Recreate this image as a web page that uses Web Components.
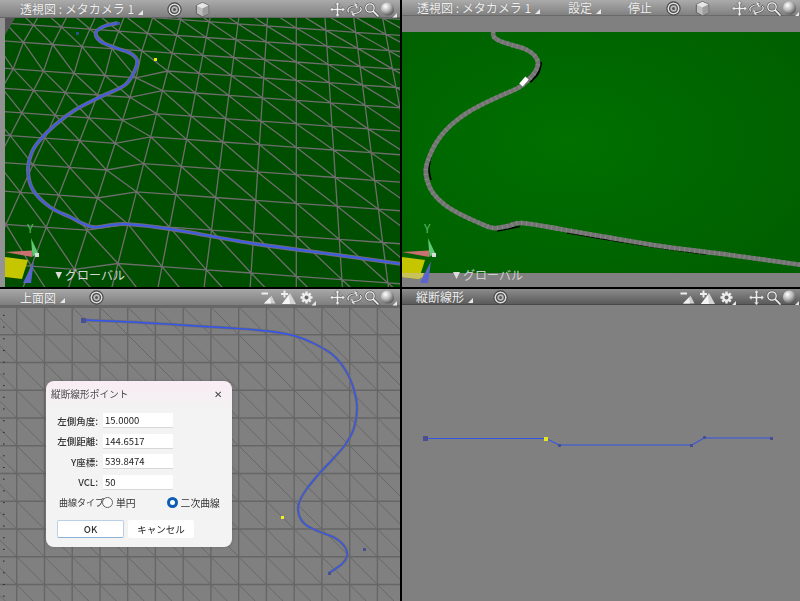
<!DOCTYPE html>
<html lang="ja"><head><meta charset="utf-8"><title>Shade</title>
<style>html,body{margin:0;padding:0;background:#000;overflow:hidden}</style></head>
<body>
<cad-app>
  <cad-view style="--bar-h:18px;--bar-a:#ababab;--bar-b:#7c7c7c">
    <view-bar slot="bar" style="--pl:20px;--pr:3.5px">
      <view-label>透視図 : メタカメラ 1</view-label>
      <view-icon name="target" style="margin-left:23px"></view-icon>
      <view-icon name="cube" style="margin-left:11px"></view-icon>
      <view-icon name="move" style="margin-left:auto"></view-icon>
      <view-icon name="rotate"></view-icon>
      <view-icon name="zoom"></view-icon>
      <view-icon name="sphere"></view-icon>
    </view-bar>
    <scene-one></scene-one>
  </cad-view>
  <cad-view style="--bar-h:16px;--bar-a:#ababab;--bar-b:#7e7e7e">
    <view-bar slot="bar" style="--pl:15px;--pr:1.5px">
      <view-label>透視図 : メタカメラ 1</view-label>
      <view-label style="margin-left:28px">設定</view-label>
      <view-label plain style="margin-left:27px">停止</view-label>
      <view-icon name="target" style="margin-left:13px"></view-icon>
      <view-icon name="cube" style="margin-left:11.5px"></view-icon>
      <view-icon name="move" style="margin-left:auto"></view-icon>
      <view-icon name="rotate"></view-icon>
      <view-icon name="zoom"></view-icon>
      <view-icon name="sphere"></view-icon>
    </view-bar>
    <scene-two></scene-two>
  </cad-view>
  <cad-view style="--bar-h:17px;--bar-a:#a8a8a8;--bar-b:#7c7c7c">
    <view-bar slot="bar" style="--pl:20px;--pr:3.5px">
      <view-label>上面図</view-label>
      <view-icon name="target" style="margin-left:23px"></view-icon>
      <view-icon name="mini-a" style="margin-left:auto"></view-icon>
      <view-icon name="mini-b" style="margin-left:3px"></view-icon>
      <view-icon name="mini-c" style="margin-left:2px;margin-right:13px"></view-icon>
      <view-icon name="move"></view-icon>
      <view-icon name="rotate"></view-icon>
      <view-icon name="zoom"></view-icon>
      <view-icon name="sphere"></view-icon>
    </view-bar>
    <scene-three></scene-three>
    <point-dialog style="left:46px;top:92px">
      <field-row label="左側角度:" value="15.0000"></field-row>
      <field-row label="左側距離:" value="144.6517"></field-row>
      <field-row label="Y座標:" value="539.8474"></field-row>
      <field-row label="VCL:" value="50"></field-row>
    </point-dialog>
  </cad-view>
  <cad-view style="--bar-h:16px;--bar-a:#8c8c8c;--bar-b:#575757">
    <view-bar slot="bar" style="--pl:14px;--pr:1.5px">
      <view-label>縦断線形</view-label>
      <view-icon name="target" style="margin-left:19px"></view-icon>
      <view-icon name="mini-a" style="margin-left:auto"></view-icon>
      <view-icon name="mini-b" style="margin-left:3px"></view-icon>
      <view-icon name="mini-c" style="margin-left:3px;margin-right:12px"></view-icon>
      <view-icon name="move"></view-icon>
      <view-icon name="zoom"></view-icon>
      <view-icon name="sphere"></view-icon>
    </view-bar>
    <scene-four></scene-four>
  </cad-view>
</cad-app>
<script>
const FONT = '"Noto Sans CJK JP","Noto Sans",sans-serif';
function smooth(p){
  let d = `M${p[0][0]} ${p[0][1]}`;
  for(let i=0;i<p.length-1;i++){
    const a=p[Math.max(i-1,0)],b=p[i],c=p[i+1],e=p[Math.min(i+2,p.length-1)];
    const f=n=>+n.toFixed(1);
    d+=`C${f(b[0]+(c[0]-a[0])/6)} ${f(b[1]+(c[1]-a[1])/6)} ${f(c[0]-(e[0]-b[0])/6)} ${f(c[1]-(e[1]-b[1])/6)} ${c[0]} ${c[1]}`;
  }
  return d;
}
function def(name, html, init){
  customElements.define(name, class extends HTMLElement{
    connectedCallback(){
      if(this.shadowRoot) return;
      const r=this.attachShadow({mode:'open'});
      r.innerHTML = typeof html==='function'?html(this):html;
      if(init) init(r,this);
    }
  });
}
def('cad-app',`<style>:host{display:grid;width:800px;height:601px;background:#000;grid-template-columns:400px 398px;grid-template-rows:287px 312px;column-gap:2px;row-gap:2px;font-family:${FONT}}</style><slot></slot>`);
def('cad-view',`<style>:host{display:flex;flex-direction:column;position:relative;overflow:hidden;background:#808080;min-width:0;min-height:0}
.b{flex:none;height:var(--bar-h);background:linear-gradient(var(--bar-a),var(--bar-b));box-shadow:inset 0 -1px 0 rgba(0,0,0,.18)}
.c{flex:1;min-height:0;display:block}</style><div class="b"><slot name="bar"></slot></div><div class="c"><slot></slot></div>`);
def('view-bar',`<style>:host{display:flex;align-items:center;height:100%;padding:0 var(--pr) 0 var(--pl);box-sizing:border-box}</style><slot></slot>`);
def('view-label',el=>`<style>:host{display:inline-flex;align-items:center;color:#f0f0f0;font-size:12px;line-height:14px;white-space:nowrap;text-shadow:0 0 1px rgba(60,60,60,.5)}
svg{width:5px;height:5px;margin:6px 0 0 4px}</style><slot></slot>${el.hasAttribute('plain')?'':'<svg viewBox="0 0 5 5"><path d="M5 0V5H0Z" fill="#e8e8e8"/></svg>'}`);
const corner='<path d="M17 12V16.5H12.5Z" fill="#e6e6e6"/>';
const ICONS={
 target:`<circle cx="8.5" cy="8.5" r="6.6" fill="#ddd" stroke="#444" stroke-width="1.1"/><circle cx="8.5" cy="8.5" r="3.9" fill="#bbb" stroke="#4a4a4a" stroke-width="1.3"/><circle cx="8.5" cy="8.5" r="1.5" fill="#555"/>`,
 cube:`<path d="M8.5 1.5L14.7 4.5V12.5L8.5 15.8L2.3 12.5V4.5Z" fill="#bdbdbd" stroke="#555" stroke-width=".9"/><path d="M8.5 1.8L14.5 4.6L8.5 7.6L2.5 4.6Z" fill="#e6e6e6"/><path d="M8.5 7.6V15.6L14.5 12.4V4.6Z" fill="#9d9d9d"/>`,
 move:`<path d="M8.5 .8L11.2 3.8H9.6V7.4H13.2V5.8L16.2 8.5L13.2 11.2V9.6H9.6V13.2H11.2L8.5 16.2L5.8 13.2H7.4V9.6H3.8V11.2L.8 8.5L3.8 5.8V7.4H7.4V3.8H5.8Z" fill="#eee" stroke="#5a5a5a" stroke-width=".6"/>`,
 rotate:`<g fill="none" stroke-linecap="round"><path d="M2.5 11C.2 8 4.5 5 9 4.7L11 3.5M14.5 6.5C17 9.5 12.5 12.5 8 12.7L6 14" stroke="#555" stroke-width="2.4"/><path d="M2.5 11C.2 8 4.5 5 9 4.7L11 3.5M14.5 6.5C17 9.5 12.5 12.5 8 12.7L6 14M9 3L11 6.5M8 14.5L5.8 10.8" stroke="#eee" stroke-width="1.1"/></g>`,
 zoom:`<g fill="none" stroke-linecap="round"><circle cx="7" cy="7" r="4.2" stroke="#555" stroke-width="2.6"/><path d="M10.4 10.4L15 15" stroke="#555" stroke-width="3.2"/><circle cx="7" cy="7" r="4.2" stroke="#f2f2f2" stroke-width="1.3"/><path d="M10.4 10.4L15 15" stroke="#f2f2f2" stroke-width="1.7"/></g>`,
 sphere:`<defs><radialGradient id="s" cx=".35" cy=".3" r=".8"><stop offset="0" stop-color="#fff"/><stop offset=".45" stop-color="#bbb"/><stop offset="1" stop-color="#444"/></radialGradient></defs><circle cx="7.5" cy="8" r="6.6" fill="url(#s)"/>${corner}`,
 'mini-a':`<path d="M1.5 3.5H8V5.5H1.5Z" fill="#eee"/><path d="M4 14.5L11.5 6.8L15.5 14.5Z" fill="#cfcfcf"/><path d="M4 14.5L10 8.5L11 14.5Z" fill="#f2f2f2"/>`,
 'mini-b':`<path d="M1 5H8M4.5 1.5V8.5" stroke="#eee" stroke-width="2"/><path d="M2 15L10 4L16 15Z" fill="#d5d5d5"/><path d="M2 15L9 6L10 15Z" fill="#f5f5f5"/>`,
 'mini-c':`<path d="M7.5 2.5V14.5M1.5 8.5H13.5M3.3 4.3L11.7 12.7M11.7 4.3L3.3 12.7" stroke="#eee" stroke-width="2.4"/><circle cx="7.5" cy="8.5" r="4.3" fill="#eee"/><circle cx="7.5" cy="8.5" r="2" fill="#6a6a6a"/>${corner}`
};
def('view-icon',el=>`<style>:host{display:block;flex:none;width:17px;height:17px}svg{display:block;width:17px;height:17px;overflow:visible}</style><svg viewBox="0 0 17 17">${ICONS[el.getAttribute('name')]}</svg>`);
const svgCss=`<style>:host{display:block;width:100%;height:100%}svg{display:block;width:100%;height:100%}text{font-family:${FONT}}</style>`;

function gizmo(dx){return `<g transform="translate(${dx} 0)">
 <text x="27" y="233" font-size="12" fill="#58b868" font-family="${FONT}">Y</text>
 <path d="M31 238L38 253L32.5 257Z" fill="#5fc872"/>
 <path d="M5 252L32 250.5V257Z" fill="#c97070"/>
 <path d="M5 257L28 260L22 279L5 277Z" fill="#c6c600"/>
 <path d="M34 261L31 283H23Z" fill="#5a64cc"/>
 <rect x="35" y="253" width="4" height="4" fill="#dcdcdc"/></g>`;}

def('scene-one',()=>{
  const rows=[-4,12,28,44,62,80.3,100.3,123.7,147.3,174.7,203.3,236.3,276.3,320];
  const pt=(u,i)=>{
    const y0=rows[i]; let y=y0,x=296.3;
    for(let k=0;k<4;k++){x=296.3+u*(27.6+.0644*y); y=y0+.072*(x-296.3);}
    if(u<-4&&y0>65) y+=9;
    return [+x.toFixed(1),+y.toFixed(1)];
  };
  let d='';
  const pl=a=>{d+='M'+a.map(p=>p.join(' ')).join('L');};
  const U0=-15,U1=11;
  for(let i=0;i<rows.length;i++){const a=[];for(let u=U0;u<=U1;u++)a.push(pt(u,i));pl(a);}
  for(let u=U0;u<=U1;u++){const a=[];for(let i=0;i<rows.length;i++)a.push(pt(u,i));pl(a);}
  for(let i=0;i+1<rows.length;i++)for(let u=U0;u<U1;u++)pl([pt(u,i),pt(u+1,i+1)]);
  const road=smooth([[118,23],[105,26],[96,32],[100,41],[116,48],[130,53],[137,60],[135,70],[125,85],[100,97],[75,110],[55,125],[40,140],[32,152],[28,170],[33,190],[50,207],[70,217],[93,227],[123,224],[170,229],[250,243],[330,254],[402,264]]);
  return svgCss+`<svg viewBox="0 18 400 269" preserveAspectRatio="none">
  <rect y="18" width="400" height="269" fill="#004f00"/>
  <path d="${d}" fill="none" stroke="#6e6e6e" stroke-width="1.3"/>
  <path d="M5 18H15L5 35Z" fill="#555"/>
  <path d="${road}" fill="none" stroke="#6c6c6c" stroke-width="4"/>
  <path d="${road}" fill="none" stroke="#3f5ce8" stroke-width="2"/>
  <rect x="117" y="22" width="3" height="3" fill="#3c55a8"/>
  <rect x="76" y="32" width="3" height="3" fill="#34508c"/>
  <rect x="154" y="58" width="3" height="3" fill="#f0f000"/>
  ${gizmo(0)}
  <path d="M55.5 272H62L58.7 279Z" fill="#ddd"/>
  <text x="65" y="280" font-size="12" fill="#d6d6d6">グローバル</text>
  <rect y="18" width="5" height="269" fill="#939393"/>
  </svg>`;
});
def('scene-two',()=>{
  const road=smooth([[493,32],[494,37],[500,41],[512,45],[525,49],[534,55],[538,63],[535,72],[527,81],[518,88],[500,96],[485,103],[470,111],[457,120],[445,131],[436,143],[430,155],[426,168],[427,180],[433,193],[445,205],[460,214],[477,222],[493,228],[508,226],[522,223],[560,229],[600,236],[660,246],[730,255],[802,265]]);
  return svgCss+`<svg viewBox="402 16 398 271" preserveAspectRatio="none">
  <defs><radialGradient id="g" cx=".42" cy=".45" r=".7"><stop offset="0" stop-color="#007000"/><stop offset="1" stop-color="#005f00"/></radialGradient>
  <clipPath id="c"><rect x="402" y="32" width="398" height="241"/></clipPath></defs>
  <rect x="402" y="16" width="398" height="271" fill="#808080"/>
  <rect x="402" y="32" width="398" height="241" fill="url(#g)"/>
  <g clip-path="url(#c)">
   <path d="${smooth([[567,232.5],[630,243],[706,254]])}" fill="none" stroke="#000" stroke-width="2"/>
   <path d="${smooth([[497,231],[520,226.5]])}" fill="none" stroke="#000" stroke-width="1.6"/>
   <path d="${smooth([[432,152],[429,168],[431,180]])}" fill="none" stroke="#000" stroke-width="1.6"/>
   <path d="${smooth([[541,62],[538,73],[530,82]])}" fill="none" stroke="#000" stroke-width="2.6"/>
   <path d="${road}" fill="none" stroke="#747474" stroke-width="4.6"/>
   <path d="${road}" fill="none" stroke="#878787" stroke-width="4.6" stroke-dasharray="1 4"/>
   <path d="M521 85L527 78" stroke="#fff" stroke-width="4.5" fill="none"/>
  </g>
  ${gizmo(397)}
  <path d="M402 273H424L422.5 277L419 279L402 277Z" fill="#c8c25a"/>
  <path d="M453 272H460L456.5 279Z" fill="#ddd"/>
  <text x="463" y="280" font-size="12" fill="#cfcfcf">グローバル</text>
  </svg>`;
});
def('scene-three',()=>{
  let d='',e='';
  for(let x=16.7;x<400;x+=27.75)d+=`M${x.toFixed(1)} 306V601`;
  for(let y=307;y<601;y+=27.75)d+=`M0 ${y.toFixed(1)}H400`;
  for(let k=-12;k<24;k++){const x=16.7+k*27.75;e+=`M${x.toFixed(1)} 307L${(x+294).toFixed(1)} 601`;}
  let t='';
  for(let y=292;y<601;y+=11.7)t+=`M3 ${y.toFixed(1)}h1.5`;
  const road=smooth([[83,320],[130,322],[180,325],[230,328],[267,331],[295,336],[315,344],[333,355],[346,371],[354,390],[357,408],[354,428],[345,445],[332,460],[318,475],[306,490],[299,503],[299,515],[306,525],[320,532],[335,538],[345,547],[347,556],[342,564],[329,573]]);
  return svgCss+`<svg viewBox="0 306 400 295" preserveAspectRatio="none">
  <rect y="306" width="400" height="295" fill="#808080"/>
  <rect y="306" width="400" height="2" fill="#6e6e6e"/>
  <path d="${d}" fill="none" stroke="#666" stroke-width="1.4"/>
  <path d="${e}" fill="none" stroke="#686868" stroke-width="1"/>
  <path d="${road}" fill="none" stroke="#6b6b74" stroke-width="2.8"/>
  <path d="${road}" fill="none" stroke="#3355f0" stroke-width="1.3"/>
  <rect x="81" y="318" width="5" height="5" fill="#4a4f92"/>
  <rect x="328" y="572" width="3" height="3" fill="#4a4f92"/>
  <rect x="363" y="548" width="3" height="3" fill="#4a4f92"/>
  <rect x="281" y="516" width="3" height="3" fill="#f0f01e"/>
  <path d="${t}" stroke="#222" stroke-width="1" fill="none"/>
  </svg>`;
});
def('scene-four',()=>svgCss+`<svg viewBox="402 305 398 296" preserveAspectRatio="none">
  <rect x="402" y="305" width="398" height="296" fill="#808080"/>
  <path d="M426 438.5L546 438.5L559 445H692L704 438H771" fill="none" stroke="#3355e4" stroke-width="1.2"/>
  <rect x="423" y="436" width="5" height="5" fill="#4a4f92"/>
  <rect x="544" y="437" width="4" height="4" fill="#e6e61e"/>
  <rect x="558" y="444" width="3" height="3" fill="#4a4f92"/>
  <rect x="690" y="444" width="3" height="3" fill="#4a4f92"/>
  <rect x="703" y="436" width="3" height="3" fill="#4a4f92"/>
  <rect x="770" y="437" width="3" height="3" fill="#4a4f92"/>
</svg>`);
def('point-dialog',`<style>
:host{position:absolute;display:flex;flex-direction:column;width:186px;height:166px;box-sizing:border-box;background:linear-gradient(#f8edf3 0,#f5f0f3 20px,#f3f3f3 27px);border-radius:8px;color:#333;font-size:9.5px;filter:blur(.25px);box-shadow:0 0 3px rgba(70,70,70,.35)}
.t{display:flex;justify-content:space-between;align-items:center;height:25px;padding:0 10px 0 5px;color:#4a4a4a;font-size:9.7px;flex:none}
.x{font-size:10px;color:#444}
.f{display:flex;flex-direction:column;gap:5.6px;margin-top:7px}
.r{display:flex;align-items:center;height:14px;margin-top:6px}
.lb{margin-left:13px;width:42px;font-size:9px;white-space:nowrap}
.rd{width:11px;height:11px;border-radius:50%;box-sizing:border-box;border:1px solid #666;background:#fafafa;flex:none}
.on{border:3.5px solid #0f5cb5;background:#fff}
.o{margin-left:3px;font-size:9.8px;white-space:nowrap}
.bs{display:flex;gap:4px;margin:10px 0 0 11px}
.b{display:flex;align-items:center;justify-content:center;box-sizing:border-box;width:66px;height:18px;background:#fff;border-radius:2px;font-size:9.5px;color:#222}
.ok{border:1px solid #b9d0e8;border-bottom-color:#8fb2d8;width:67px;font-weight:500;color:#333}
</style>
<div class="t"><span>縦断線形ポイント</span><span class="x">✕</span></div>
<div class="f"><slot></slot></div>
<div class="r"><span class="lb">曲線タイプ</span><span class="rd" style="margin-left:1px"></span><span class="o">単円</span><span class="rd on" style="margin-left:31px"></span><span class="o">二次曲線</span></div>
<div class="bs"><span class="b ok">OK</span><span class="b">キャンセル</span></div>`);
def('field-row',el=>`<style>:host{display:flex;align-items:center;height:15px}
.l{width:52px;text-align:right;font-size:9.5px;font-weight:500;color:#333;white-space:nowrap}
.v{margin-left:5px;width:70px;height:15px;box-sizing:border-box;background:#fff;border-bottom:1px solid #d8d8d8;padding-left:2px;font-size:9.5px;line-height:14px;color:#222}</style>
<span class="l">${el.getAttribute('label')}</span><span class="v">${el.getAttribute('value')}</span>`);
</script>
</body></html>
